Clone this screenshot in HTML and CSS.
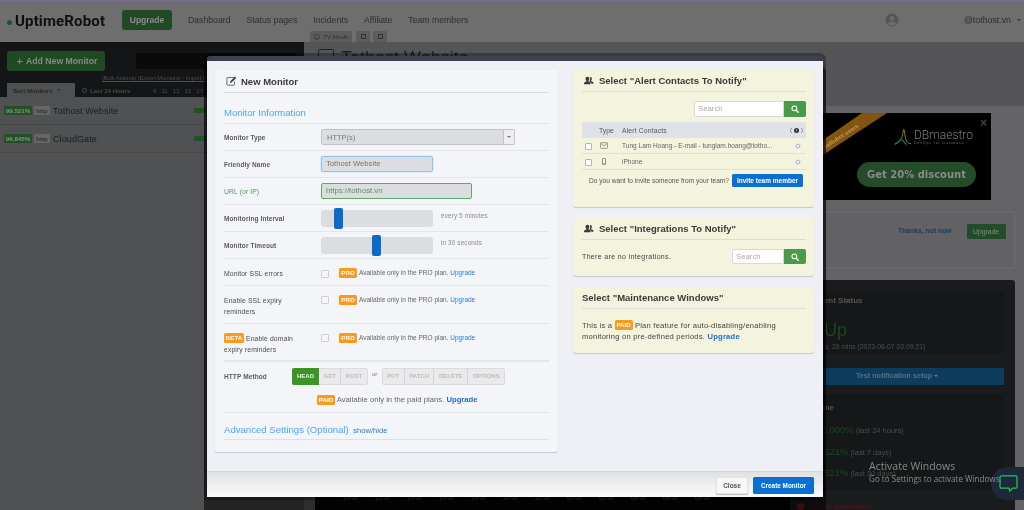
FILE: index.html
```html
<!DOCTYPE html>
<html lang="en">
<head>
<meta charset="utf-8">
<title>UptimeRobot - New Monitor</title>
<link rel="stylesheet" href="styles.css">
</head>
<body>
<svg class="sprite" aria-hidden="true">
  <symbol id="i-users" viewBox="0 0 16 14"><path d="M5.500 1a3 3 0 0 1 3 3.200c0 1.500-.7 2.700-1.500 3.300v1c2 .6 3.700 1.400 3.700 2.700V13H0v-1.800c0-1.300 1.800-2.100 3.800-2.700v-1C3 6.900 2.400 5.700 2.400 4.200A3 3 0 0 1 5.500 1zM10 1.500a2.600 2.600 0 0 1 2.700 2.800c0 1.300-.6 2.400-1.300 2.900v.9c1.800.5 3.600 1.200 3.600 2.400V12h-3c-.3-1.600-1.600-2.500-3.200-3.100v-.7c.7-.8 1.200-2.200 1.200-3.900 0-1-.2-1.900-.7-2.500.2-.2.400-.3.700-.3z"/></symbol>
  <symbol id="i-search" viewBox="0 0 12 12"><circle cx="5" cy="5" r="3.600" fill="none" stroke="currentColor" stroke-width="1.600"/><path d="M7.800 7.800l3 3" stroke="currentColor" stroke-width="2" stroke-linecap="round"/></symbol>
  <symbol id="i-gear" viewBox="0 0 12 12"><circle cx="6" cy="6" r="3.500" fill="none" stroke="currentColor" stroke-width="2"/><path d="M6 .5v2M6 9.500v2M.5 6h2M9.500 6h2M2.100 2.100l1.400 1.400M8.500 8.500l1.400 1.400M2.100 9.900l1.400-1.400M8.500 3.500l1.400-1.400" stroke="currentColor" stroke-width="1.300"/></symbol>
</svg>
<div class="stage">
  <div class="page">
    <header class="nav">
      <a class="logo"><i class="logo-dot"></i>UptimeRobot</a>
      <a class="nav-upgrade">Upgrade</a>
      <nav class="nav-links">
        <a>Dashboard</a><a>Status pages</a><a>Incidents</a><a>Affiliate</a><a>Team members</a>
      </nav>
      <svg class="nav-avatar" viewBox="0 0 14 14"><circle cx="7" cy="7" r="6.500" fill="#555"/><circle cx="7" cy="5.300" r="2.400" fill="#6c6c6c"/><path d="M2.800 11c.6-2 2.400-2.800 4.200-2.800s3.600.8 4.200 2.800a6 6 0 0 1-8.400 0z" fill="#6c6c6c"/></svg>
      <span class="nav-user">@tothost.vn</span><i class="caret nav-caret"></i>
    </header>
    <div class="main">
      <aside class="monitors">
        <div class="monitors-top">
          <div class="toolbar">
            <a class="add-btn"><span class="plus">+</span> Add New Monitor</a>
            <div class="dark-search"></div>
          </div>
          <div class="bulk">(Bulk Actions) (Export Monitors) - Import Monitors</div>
          <div class="sort-row">
            <span class="sort-tab">Sort Monitors <i class="caret"></i></span>
            <span class="period"><i class="clock"></i>Last 24 Hours</span>
            <span class="hours"><b>9</b><b>11</b><b>13</b><b>15</b><b>17</b></span>
          </div>
        </div>
        <div class="mon-row"><span class="pct">99.521%</span><span class="proto">http</span><span class="mon-name">Tothost Website</span><i class="mon-bar"></i></div>
        <div class="mon-row"><span class="pct">96.845%</span><span class="proto">http</span><span class="mon-name">CloudGate</span><i class="mon-bar"></i></div>
      </aside>
      <section class="content">
        <div class="tabs">
          <span class="tab tab-tv"><svg class="tv-ico" viewBox="0 0 8 7"><rect x=".5" y=".5" width="7" height="4.500" fill="none" stroke="#333" stroke-width=".8"/><path d="M2 6.500h4" stroke="#333" stroke-width=".8"/></svg>TV Mode</span>
          <span class="tab tab-sq"><i class="tab-glyph"></i></span>
          <span class="tab tab-sq"><i class="tab-glyph"></i></span>
        </div>
        <div class="content-head"><i class="head-box"></i><span class="head-title">Tothost Website</span></div>
        <div class="content-body">
          <div class="chart">
            <div class="chart-space"></div>
            <div class="chart-axis"><span>10:00</span><span>12:00</span><span>14:00</span><span>16:00</span><span>18:00</span><span>20:00</span><span>22:00</span><span>00:00</span><span>02:00</span><span>04:00</span><span>06:00</span><span>08:00</span></div>
          </div>
          <div class="side">
            <div class="ad">
              <svg class="ribbon" viewBox="0 0 201 87"><polygon points="33,27 72,0 97,0 33,42" fill="#83560f"/><text transform="translate(69 14) rotate(-33)" text-anchor="end" class="ribbon-text">UptimeRobot users</text></svg>
              <span class="ad-x">×</span>
              <div class="ad-logo">
                <svg class="ad-mark" viewBox="0 0 20 20"><path d="M1 18c4-1 6-3 8-8 1-3 1-7 2-8 1 3 1 9 3 13 1 2 3 3 5 3" fill="none" stroke="#8a9a20" stroke-width="1"/><path d="M1 19c3-3 6-6 8-5s3 4 5 5" fill="none" stroke="#128080" stroke-width="1.200"/></svg>
                <div><div class="ad-name">DBmaestro</div><div class="ad-sub">DevOps for Database</div></div>
              </div>
              <a class="ad-btn">Get 20% discount</a>
            </div>
            <div class="notice"><a class="notice-link">Thanks, not now</a><a class="notice-btn">Upgrade</a></div>
            <div class="panel">
              <div class="panel-title">Current Status</div>
              <div class="status-big">Up</div>
              <div class="status-sub">3 hrs, 26 mins (2023-06-07 03:09:21)</div>
              <div class="test-btn">Test notification setup <i class="caret caret-light"></i></div>
              <div class="uptime">
                <div class="uptime-title">Uptime</div>
                <div class="up-row"><span class="up-pct">100.000%</span> <span class="up-note">(last 24 hours)</span></div>
                <div class="up-row"><span class="up-pct">99.521%</span> <span class="up-note">(last 7 days)</span></div>
                <div class="up-row"><span class="up-pct">99.521%</span> <span class="up-note">(last 30 days)</span></div>
              </div>
              <div class="downtime"><i class="down-ico"></i>Latest downtime</div>
            </div>
          </div>
        </div>
      </section>
    </div>
  </div>

  <div class="modal">
    <div class="modal-body">
      <div class="card card-left">
        <h2 class="card-title title-main"><svg class="ico-edit" viewBox="0 0 14 13"><path d="M10 2H2a1 1 0 0 0-1 1v8a1 1 0 0 0 1 1h8a1 1 0 0 0 1-1V7" fill="none" stroke="#444" stroke-width="1"/><path d="M5 9l.5-2.200L11.500 .8l1.700 1.700-6 6z" fill="#444"/></svg>New Monitor</h2>
        <h3 class="section">Monitor Information</h3>
        <div class="row"><label class="lbl">Monitor Type</label><div class="select"><span>HTTP(s)</span><i class="sel-arrow"></i></div></div>
        <div class="row"><label class="lbl">Friendly Name</label><div class="input input-focus">Tothost Website</div></div>
        <div class="row"><label class="lbl lbl-ok">URL (or IP)</label><div class="input input-ok">https://tothost.vn</div></div>
        <div class="row"><label class="lbl">Monitoring Interval</label><div class="slider"><i class="handle h-5"></i></div><span class="hint">every 5 minutes</span></div>
        <div class="row"><label class="lbl">Monitor Timeout</label><div class="slider"><i class="handle h-30"></i></div><span class="hint">in 30 seconds</span></div>
        <div class="row row-ssl"><label class="lbl lbl-n">Monitor SSL errors</label><i class="cbx"></i><span class="badge">PRO</span><span class="avail">Available only in the PRO plan. <a class="link">Upgrade</a></span></div>
        <div class="row row-tall"><label class="lbl lbl-n">Enable SSL expiry reminders</label><i class="cbx"></i><span class="badge">PRO</span><span class="avail">Available only in the PRO plan. <a class="link">Upgrade</a></span></div>
        <div class="row row-tall row-thick"><label class="lbl lbl-n"><span class="badge badge-beta">BETA</span> Enable domain expiry reminders</label><i class="cbx"></i><span class="badge">PRO</span><span class="avail">Available only in the PRO plan. <a class="link">Upgrade</a></span></div>
        <div class="method">
          <div class="method-top">
            <label class="lbl lbl-method">HTTP Method</label>
            <div class="btn-group"><span class="m-btn m-on">HEAD</span><span class="m-btn">GET</span><span class="m-btn">POST</span></div>
            <span class="or">or</span>
            <div class="btn-group"><span class="m-btn">PUT</span><span class="m-btn">PATCH</span><span class="m-btn">DELETE</span><span class="m-btn">OPTIONS</span></div>
          </div>
          <div class="paid-note"><span class="badge">PAID</span> Available only in the paid plans. <a class="link link-b">Upgrade</a></div>
        </div>
        <div class="advanced"><span class="adv-title">Advanced Settings (Optional)</span> <a class="adv-link">show/hide</a></div>
      </div>
      <div class="col-right">
        <div class="card card-y card-alerts">
          <h2 class="card-title"><svg class="ico-users"><use href="#i-users"/></svg>Select "Alert Contacts To Notify"</h2>
          <div class="search-line"><div class="search"><span class="search-in">Search</span><span class="search-btn"><svg class="ico-search"><use href="#i-search"/></svg></span></div></div>
          <div class="t-head"><span class="t-type">Type</span><span class="t-name">Alert Contacts</span><span class="t-info">( <i class="info-dot">!</i> )</span></div>
          <div class="t-row"><i class="t-cbx"></i><svg class="t-ico" viewBox="0 0 10 8"><rect x=".5" y=".5" width="9" height="7" rx="1" fill="none" stroke="#666" stroke-width=".8"/><path d="M1 1.500l4 3 4-3" fill="none" stroke="#666" stroke-width=".8"/></svg><span class="t-text">Tung Lam Hoang - E-mail - tunglam.hoang@totho...</span><svg class="t-gear"><use href="#i-gear"/></svg></div>
          <div class="t-row"><i class="t-cbx"></i><svg class="t-ico" viewBox="0 0 10 10"><rect x="2.800" y=".5" width="4.400" height="9" rx=".8" fill="none" stroke="#555" stroke-width=".9"/><path d="M4 8h2" stroke="#555" stroke-width=".8"/></svg><span class="t-text">iPhone</span><svg class="t-gear"><use href="#i-gear"/></svg></div>
          <div class="invite"><span>Do you want to invite someone from your team?</span><a class="invite-btn">Invite team member</a></div>
        </div>
        <div class="card card-y card-integ">
          <h2 class="card-title"><svg class="ico-users"><use href="#i-users"/></svg>Select "Integrations To Notify"</h2>
          <div class="integ-line"><span class="integ-none">There are no integrations.</span><div class="search search-s"><span class="search-in">Search</span><span class="search-btn"><svg class="ico-search"><use href="#i-search"/></svg></span></div></div>
        </div>
        <div class="card card-y card-maint">
          <h2 class="card-title">Select "Maintenance Windows"</h2>
          <p class="maint-text">This is a <span class="badge">PAID</span> Plan feature for auto-disabling/enabling monitoring on pre-defined periods. <a class="link link-b">Upgrade</a></p>
        </div>
      </div>
    </div>
    <footer class="modal-foot"><a class="btn-close">Close</a><a class="btn-create">Create Monitor</a></footer>
  </div>

  <div class="chat"><svg viewBox="0 0 20 18"><path d="M2.500 1h15A1.500 1.500 0 0 1 19 2.500v10a1.500 1.500 0 0 1-1.500 1.500H14l-2.500 3-1-3h-8A1.500 1.500 0 0 1 1 12.500v-10A1.500 1.500 0 0 1 2.500 1z" fill="none" stroke="#23c45e" stroke-width="1.300"/></svg></div>
  <div class="activate"><div class="act-1">Activate Windows</div><div class="act-2">Go to Settings to activate Windows.</div></div>
</div>
</body>
</html>
```
FILE: styles.css
```css
* { box-sizing: border-box; }
html, body { margin: 0; padding: 0; }
body { width: 1024px; height: 510px; overflow: hidden; background: #505050; font-family: "Liberation Sans", Arial, sans-serif; }
a { text-decoration: none; }
h2, h3, p { margin: 0; }
i { display: block; font-style: normal; }
.sprite { display: none; }
.stage { position: relative; width: 1024px; height: 510px; overflow: hidden; filter: blur(.4px); }

/* dimmed page */
.page { height: 510px; display: flex; flex-direction: column; background: #505050; }
.nav { height: 42px; flex: none; display: flex; align-items: center; padding: 0 3px 3px 7px; background: #6e6e6e; border-top: 1px solid #7d6a93; color: #2b2b2b; }
.logo { display: flex; align-items: center; font: 700 15px "Roboto", sans-serif; color: #101010; width: 115px; padding-top: 1px; letter-spacing: .15px; }
.logo-dot { width: 5px; height: 5px; border-radius: 50%; background: #17562a; margin: 3px 3px 0 0; }
.nav-upgrade { width: 50px; height: 20px; background: #204a24; border-radius: 3px; color: #8c8c8c; font-size: 8.500px; font-weight: 700; display: flex; align-items: center; justify-content: center; }
.nav-links { display: flex; gap: 16px; margin-left: 16px; font-size: 8.700px; color: #2e2e2e; flex: 1; }
.nav-avatar { width: 14px; height: 14px; margin-right: 65px; }
.nav-user { font-size: 8.800px; color: #2e2e2e; }
.nav-caret { margin-left: 6px; }
.caret { display: inline-block; width: 0; height: 0; border: 2px solid transparent; border-top: 2.500px solid #333; border-bottom: 0; vertical-align: middle; }
.caret-light { border-top-color: #777; }

.main { flex: 1; display: flex; min-height: 0; }
.monitors { width: 304px; flex: none; background: #505153; }
.monitors-top { height: 55px; background: #141517; padding: 9px 0 0 7px; position: relative; }
.toolbar { display: flex; gap: 31px; align-items: center; }
.add-btn { width: 98px; height: 20px; border-radius: 3px; background: #204a24; color: #888; font-size: 8.700px; font-weight: 700; display: flex; align-items: center; justify-content: center; gap: 3px; padding-left: 2px; }
.plus { font-size: 11px; font-weight: 400; }
.dark-search { width: 160px; height: 16px; background: #0a0a0b; border-radius: 2px; }
.bulk { font-size: 5.600px; color: #4d4d4d; margin: 4px 0 0 95px; text-decoration: underline; white-space: nowrap; line-height: 7px; }
.sort-row { display: flex; align-items: center; height: 14px; margin-top: 1px; font-size: 6.100px; font-weight: 700; color: #4a4a4a; }
.sort-tab { width: 68px; height: 14px; background: #4f5052; color: #262626; display: flex; align-items: center; gap: 4px; padding-left: 6px; }
.period { display: flex; align-items: center; gap: 3px; margin-left: 7px; width: 71px; }
.clock { width: 5px; height: 5px; border: 1px solid #4a4a4a; border-radius: 50%; }
.hours { display: flex; gap: 5px; font-weight: 400; }
.hours b { font-weight: 400; }
.mon-row { height: 28px; display: flex; align-items: center; padding-left: 4px; border-bottom: 1px solid #484848; position: relative; }
.pct { width: 28px; height: 9px; background: #215226; color: #8c8c8c; font-size: 6.200px; font-weight: 700; display: flex; align-items: center; justify-content: center; }
.proto { width: 16px; height: 9px; margin-left: 2px; background: #666; color: #333; font-size: 6px; font-weight: 700; display: flex; align-items: center; justify-content: center; }
.mon-name { font-size: 9px; margin-left: 3px; color: #1c1c1c; flex: 1; letter-spacing: .1px; }
.mon-bar { width: 12px; height: 5px; background: #215226; margin-right: 98px; }

.content { flex: 1; min-width: 0; display: flex; flex-direction: column; }
.tabs { display: flex; gap: 3px; height: 11px; margin: -11px 0 0 6px; }
.tab { height: 11px; background: #5c5c5c; color: #333; font-size: 6.200px; font-style: italic; border-radius: 2px 2px 0 0; display: flex; align-items: center; justify-content: center; }
.tab-tv { width: 42px; gap: 3px; margin-right: 1px; }
.tv-ico { width: 6px; height: 6px; }
.tab-sq { width: 14px; }
.tab-glyph { width: 5px; height: 5px; border: 1px solid #333; }
.content-head { height: 64px; flex: none; background: #555557; display: flex; gap: 7px; padding: 7px 0 0 14px; }
.head-box { width: 16px; height: 14px; border: 1px solid #222; border-radius: 2px; }
.head-title { font-size: 18px; color: #222; line-height: 18px; }
.content-body { flex: 1; display: flex; min-height: 0; background: #646466; }
.chart { width: 475px; margin-left: 11px; display: flex; flex-direction: column; }
.chart-space { height: 385px; flex: none; }
.chart-axis { flex: 1; background: #060606; display: flex; gap: 16.500px; padding: 0 0 0 28px; font-size: 6.200px; color: #777; line-height: 13px; }
.side { width: 225px; flex: none; }
.ad { position: relative; margin-top: 7px; width: 201px; height: 87px; background: #000; overflow: hidden; display: flex; flex-direction: column; align-items: flex-end; padding: 14px 18px 0 0; }
.ribbon { position: absolute; left: 0; top: 0; width: 201px; height: 87px; }
.ribbon-text { font: 700 5.800px "Liberation Sans", sans-serif; fill: #bb9a66; }
.ad-x { position: absolute; right: 4px; top: 3px; color: #444; font-size: 12px; font-weight: 700; }
.ad-logo { display: flex; gap: 2px; align-items: flex-end; }
.ad-mark { width: 18px; height: 19px; }
.ad-name { font: 300 12px "Roboto", sans-serif; color: #7c7c7c; line-height: 11px; }
.ad-sub { font-size: 3.700px; letter-spacing: .8px; color: #666; line-height: 5px; white-space: nowrap; }
.ad-btn { width: 119px; height: 25px; margin-top: 16px; border-radius: 13px; background: #244c28; color: #8a8a8a; font: 700 10px "DejaVu Sans", sans-serif; display: flex; align-items: center; justify-content: center; position: relative; margin-right: -3px; }
.notice { margin: 12px 0 0 33px; width: 192px; height: 56px; background: #626264; border: 1px solid #6c6c6e; display: flex; align-items: flex-start; padding-top: 11px; padding-left: 74px; gap: 15px; }
.notice-link { color: #123f60; font-size: 6.800px; font-weight: 700; padding-top: 3px; white-space: nowrap; }
.notice-btn { width: 39px; height: 15px; background: #224c2a; color: #7f8f7b; font-size: 6.800px; display: flex; align-items: center; justify-content: center; border-radius: 1px; }
.panel { margin-top: 12px; height: 230px; background: #1a1b1d; padding: 11px 11px 0 0; position: relative; border-radius: 3px 3px 0 0; }
.panel-title { height: 22px; background: #161719; padding-left: 17px; font-size: 8px; font-weight: 700; color: #555; line-height: 20px; }
.status-big { height: 29px; font-size: 18px; color: #174a1c; padding-left: 34px; line-height: 34px; background: #161719; }
.status-sub { font-size: 6.800px; color: #4d4d4d; background: #161719; line-height: 9px; height: 12px; padding-left: 23px; white-space: nowrap; }
.test-btn { height: 17px; background: #0e3c5c; margin-top: 14px; color: #567088; font-size: 7.200px; font-weight: 700; text-align: center; line-height: 16px; }
.uptime { margin-top: 9px; background: #161719; height: 96px; padding: 9px 0 0 8px; }
.uptime-title { font-size: 7.600px; font-weight: 700; color: #555; padding-left: 10px; line-height: 10px; }
.up-row { height: 21.500px; line-height: 21px; padding-left: 13px; color: #4d4d4d; font-size: 7.500px; white-space: nowrap; }
.up-row:nth-child(2) { margin-top: 6px; }
.up-pct { font-size: 9.500px; color: #174a1c; }
.downtime { display: flex; align-items: center; gap: 4px; color: #4c1616; font-size: 8px; font-weight: 700; margin-top: 12px; padding-left: 7px; }
.down-ico { width: 7px; height: 7px; border-radius: 50%; background: #7a2020; }

/* modal */
.modal { position: absolute; left: 207px; top: 56px; width: 616px; height: 441px; background: #eff0f6; border-top: 5px solid #3d4050; box-shadow: 0 0 0 3px rgba(0,0,0,.3), 0 13px 0 3px rgba(0,0,0,.55); border-radius: 3px 3px 0 0; display: flex; flex-direction: column; }
.modal-body { flex: 1; display: flex; gap: 15px; padding: 9px 9px 0 8px; min-height: 0; }
.card { border-radius: 3px; box-shadow: 0 1px 1px #c4c6d0; padding: 0 9px; }
.card-left { width: 343px; height: 382px; background: #f4f5f9; }
.col-right { width: 241px; display: flex; flex-direction: column; gap: 11px; }
.card-y { background: #f4f3dd; padding-right: 8px; }
.card-alerts { height: 137px; }
.card-integ { height: 58px; }
.card-maint { height: 66px; }
.card-title { height: 23px; display: flex; align-items: center; gap: 5px; font-size: 9.500px; font-weight: 700; color: #3a3a3a; border-bottom: 1px solid #dcdde0; white-space: nowrap; }
.title-main { gap: 4px; padding-left: 2px; }
.col-right .card-title { height: 22px; }
.ico-edit { width: 11px; height: 10px; }
.ico-users { width: 10px; height: 9px; fill: #3a3a3a; margin-left: 2px; }
.section { height: 31px; padding-top: 14px; font-size: 9.500px; line-height: 12px; font-weight: 400; color: #4ca6f5; border-bottom: 1px solid #e4e5ea; }
.row { height: 27px; display: flex; align-items: center; border-bottom: 1px solid #e4e5ea; position: relative; }
.row-ssl { padding-top: 2px; }
.row-tall { height: 38px; align-items: flex-start; padding-top: 9px; }
.row-thick { border-bottom-width: 2px; }
.lbl { width: 97px; flex: none; font-size: 6.500px; font-weight: 700; color: #5c5c5c; line-height: 11px; letter-spacing: .1px; }
.lbl-ok { color: #4f9a55; font-weight: 400; font-size: 6.800px; }
.lbl-n { font-weight: 400; font-size: 6.800px; color: #4d4d4d; letter-spacing: .12px; padding-right: 16px; }
.select { width: 194px; height: 16px; background: #dcdde0; border: 1px solid #c4c4c8; border-radius: 2px; font-size: 7.500px; color: #777; display: flex; align-items: center; justify-content: space-between; padding-left: 5px; }
.sel-arrow { width: 11px; height: 14px; background: #eee; border-left: 1px solid #c4c4c8; position: relative; }
.sel-arrow::after { content: ""; position: absolute; left: 3px; top: 6px; border: 2px solid transparent; border-top: 2.500px solid #777; border-bottom: 0; }
.input { height: 16px; background: #dcdde0; border-radius: 2px; font-size: 7.700px; color: #777; padding: 0 4px; line-height: 14px; }
.input-focus { width: 112px; border: 1px solid #8ec4f0; box-shadow: 0 0 2px #a9d4f5; }
.input-ok { width: 151px; border: 1px solid #64a868; color: #55965a; }
.slider { position: relative; width: 112px; height: 17px; background: #dcdde0; border-radius: 3px; }
.handle { position: absolute; top: -2px; width: 9px; height: 21px; background: #0c6bc8; border-radius: 2px; }
.h-5 { left: 13px; }
.h-30 { left: 51px; }
.hint { margin: -5px 0 0 8px; font-size: 6.400px; color: #8a8a8a; letter-spacing: .12px; }
.cbx { width: 8px; height: 8px; border: 1px solid #d0d0d4; border-radius: 1px; background: #f6f6f8; flex: none; margin-right: 10px; margin-top: 1px; }
.badge { display: inline-block; width: 18px; height: 10px; line-height: 10px; text-align: center; background: #fa9612; color: #fff; font-size: 6.200px; font-weight: 700; border-radius: 1.500px; flex: none; opacity: .95; }
.badge-beta { width: 20px; vertical-align: top; }
.avail { font-size: 6.500px; color: #666; margin-left: 2px; white-space: nowrap; line-height: 10px; }
.link { color: #2a7bd5; }
.link-b { color: #1a6fcc; font-weight: 700; }
.method { height: 51px; padding-top: 6px; border-bottom: 1px solid #e4e5ea; }
.method-top { display: flex; align-items: center; height: 16px; }
.lbl-method { width: 68px; }
.btn-group { display: flex; border: 1px solid #dbdbdd; border-radius: 2px; background: #eaeaec; }
.m-btn { height: 15px; padding: 0 4.500px; border-right: 1px solid #d4d4d6; font-size: 6px; font-weight: 700; color: #bbb; line-height: 15px; }
.m-btn:last-child { border-right: 0; }
.m-on { background: #3a9426; color: #f0f0f0; border-radius: 2px 0 0 2px; margin: -1px 0 -1px -1px; height: 17px; line-height: 17px; padding: 0 5px; border-right: 0; }
.or { width: 14px; text-align: center; font-size: 6px; color: #777; margin-top: -4px; }
.paid-note { margin-top: 11px; padding-left: 93px; font-size: 7.700px; color: #666; line-height: 10px; white-space: nowrap; }
.advanced { height: 27px; border-bottom: 1px solid #dfe0e4; padding-top: 8px; line-height: 13px; white-space: nowrap; }
.adv-title { font-size: 9.600px; color: #4ca6f5; }
.adv-link { font-size: 7.600px; color: #2a7bd5; }
.search-line { display: flex; justify-content: flex-end; padding: 9px 0 5px; }
.search { display: flex; height: 16px; }
.search-in { width: 90px; background: #fff; border: 1px solid #d8d8dc; border-radius: 2px 0 0 2px; font-size: 7.800px; color: #aaa; padding-left: 3px; line-height: 14px; }
.search-btn { width: 22px; background: #4a9a4a; border-radius: 0 2px 2px 0; display: flex; align-items: center; justify-content: center; color: #fff; }
.ico-search { width: 8px; height: 8px; }
.t-head { height: 16px; background: #e0e2ea; display: flex; align-items: center; font-size: 6.800px; color: #555; }
.t-type { margin-left: 17px; width: 23px; }
.t-name { flex: 1; font-weight: 400; letter-spacing: .15px; }
.t-info { padding-right: 3px; font-size: 6px; display: flex; gap: 2px; align-items: center; }
.info-dot { width: 5px; height: 5px; background: #333; border-radius: 50%; color: #eee; font-size: 4px; line-height: 5px; text-align: center; font-weight: 700; }
.t-row { height: 16px; display: flex; align-items: center; border-bottom: 1px solid #e0e0d8; font-size: 6.550px; color: #666; }
.t-cbx { width: 7px; height: 7px; margin: 2px 0 0 3px; background: #fff; border: 1px solid #b4b4b4; border-radius: 1px; flex: none; }
.t-ico { width: 8px; height: 7px; margin-left: 8px; flex: none; }
.t-text { margin-left: 14px; flex: 1; white-space: nowrap; }
.t-gear { width: 6px; height: 6px; color: #b4bcca; margin-right: 5px; }
.invite { display: flex; align-items: center; justify-content: space-between; margin-top: 4px; padding: 0 3px 0 7px; font-size: 6.600px; color: #555; white-space: nowrap; }
.invite-btn { width: 71px; height: 13px; background: #0a6fd0; color: #fff; font-size: 6.500px; font-weight: 700; border-radius: 1.500px; text-align: center; line-height: 13px; flex: none; }
.integ-line { display: flex; justify-content: space-between; align-items: center; padding-top: 9px; font-size: 7px; color: #444; letter-spacing: .35px; }
.search-s .search-in { width: 52px; letter-spacing: 0; }
.search-s { height: 15px; }
.maint-text { padding: 11px 12px 0 0; font-size: 7.600px; line-height: 11px; color: #444; letter-spacing: .22px; }
.maint-text .badge { vertical-align: top; letter-spacing: 0; }
.modal-foot { height: 26px; flex: none; display: flex; align-items: flex-start; justify-content: flex-end; gap: 5px; padding: 5px 9px 0 0; background: linear-gradient(#dfe1e3, #fbfbfc); border-top: 1px solid #d4d6da; }
.btn-close { width: 32px; height: 17px; background: #f7f7f7; border: 1px solid #e4e4e4; box-shadow: 0 1px 1px #bbb; color: #555; font-size: 6.500px; font-weight: 700; line-height: 15px; text-align: center; border-radius: 1.500px; }
.btn-create { width: 61px; height: 17px; background: #0a6fd0; color: #fff; font-size: 6.400px; font-weight: 700; line-height: 17px; text-align: center; border-radius: 1.500px; }

/* OS overlays */
.activate { position: absolute; left: 869px; top: 459px; color: #8a8a8a; font-family: "Open Sans", sans-serif; white-space: nowrap; }
.act-1 { font-size: 10.500px; line-height: 14px; }
.act-2 { font-size: 8.100px; line-height: 11px; }
.chat { position: absolute; left: 991px; top: 467px; width: 33px; height: 33px; border-radius: 50% 0 0 50%; background: #1d2838; display: flex; align-items: center; padding-left: 8px; }
.chat svg { width: 19px; height: 17px; }
```
